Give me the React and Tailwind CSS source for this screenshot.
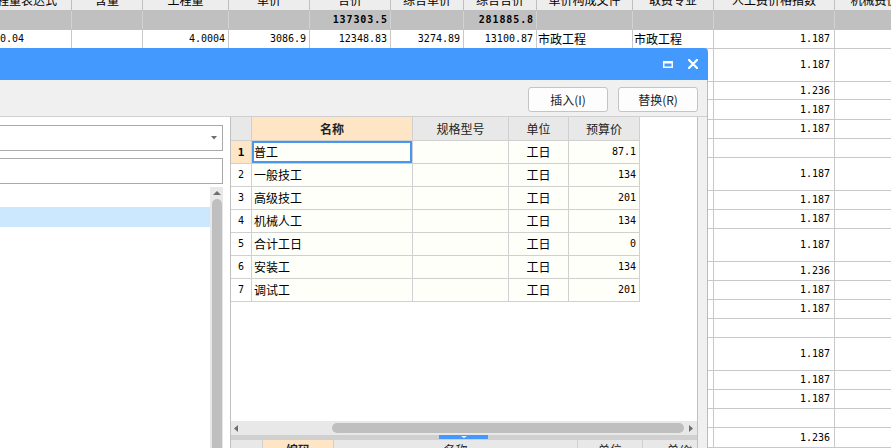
import React from "react";

const NUM = "font-['DejaVu_Sans_Mono',monospace] text-[10px]";

const SHEET_W = [
  "w-[101px]", "w-[71px]", "w-[86px]", "w-[81px]", "w-[81px]", "w-[73px]",
  "w-[73px]", "w-[96px]", "w-[81px]", "w-[121px]", "w-[116px]",
];
const HEAD = [
  "工程量表达式", "含量", "工程量", "单价", "合价", "综合单价",
  "综合合价", "单价构成文件", "取费专业", "人工费价格指数", "机械费价格指数",
];

const ROWS = [
  ["h-[33px]", "1.187"], ["h-[18px]", "1.236"], ["h-[20px]", "1.187"],
  ["h-[19px]", "1.187"], ["h-[19px]", ""], ["h-[33px]", "1.187"],
  ["h-[19px]", "1.187"], ["h-[19px]", "1.187"], ["h-[33px]", "1.187"],
  ["h-[19px]", "1.236"], ["h-[19px]", "1.187"], ["h-[19px]", "1.187"],
  ["h-[19px]", ""], ["h-[33px]", "1.187"], ["h-[19px]", "1.187"],
  ["h-[19px]", "1.187"], ["h-[19px]", ""], ["h-[20px]", "1.236"],
  ["h-[20px]", ""],
];

function Sheet() {
  return (
    <div className="ml-[-29px] w-[960px]">
      <div className="flex h-[21px] mt-[-10px] bg-[#ededed] border-b border-[#c0c0c0]">
        {HEAD.map((h, i) => (
          <div key={i} className={`${SHEET_W[i]} shrink-0 h-full flex items-center justify-center border-r border-[#c0c0c0] whitespace-nowrap overflow-hidden`}>
            {h}
          </div>
        ))}
      </div>
      <div className="flex h-[19px] bg-[#c0c0c0] border-b border-[#c0c0c0]">
        {SHEET_W.map((w, i) => (
          <div key={i} className={`${w} shrink-0 h-full flex items-center justify-end pr-[2px] border-r border-[#d2d2d2] ${NUM} font-bold tracking-[0.9px]`}>
            {i === 4 ? "137303.5" : i === 6 ? "281885.8" : ""}
          </div>
        ))}
      </div>
      <div className="flex h-[19px] border-b border-[#c8c8c8]">
        <div className={`${SHEET_W[0]} shrink-0 h-full flex items-center pl-[29px] border-r border-[#c8c8c8] ${NUM}`}>0.04</div>
        <div className={`${SHEET_W[1]} shrink-0 h-full border-r border-[#c8c8c8]`} />
        <div className={`${SHEET_W[2]} shrink-0 h-full flex items-center justify-end pr-[3px] border-r border-[#c8c8c8] ${NUM}`}>4.0004</div>
        <div className={`${SHEET_W[3]} shrink-0 h-full flex items-center justify-end pr-[3px] border-r border-[#c8c8c8] ${NUM}`}>3086.9</div>
        <div className={`${SHEET_W[4]} shrink-0 h-full flex items-center justify-end pr-[3px] border-r border-[#c8c8c8] ${NUM}`}>12348.83</div>
        <div className={`${SHEET_W[5]} shrink-0 h-full flex items-center justify-end pr-[3px] border-r border-[#c8c8c8] ${NUM}`}>3274.89</div>
        <div className={`${SHEET_W[6]} shrink-0 h-full flex items-center justify-end pr-[3px] border-r border-[#c8c8c8] ${NUM}`}>13100.87</div>
        <div className={`${SHEET_W[7]} shrink-0 h-full flex items-center pl-[1px] border-r border-[#c8c8c8]`}>市政工程</div>
        <div className={`${SHEET_W[8]} shrink-0 h-full flex items-center pl-[1px] border-r border-[#c8c8c8]`}>市政工程</div>
        <div className={`${SHEET_W[9]} shrink-0 h-full flex items-center justify-end pr-[4px] border-r border-[#c8c8c8] ${NUM}`}>1.187</div>
        <div className={`${SHEET_W[10]} shrink-0 h-full border-r border-[#c8c8c8]`} />
      </div>
      {ROWS.map(([h, v], r) => (
        <div key={r} className={`flex ${h} border-b border-[#c8c8c8]`}>
          {SHEET_W.map((w, i) => (
            <div key={i} className={`${w} shrink-0 h-full flex items-center justify-end pr-[4px] border-r border-[#c8c8c8] ${NUM}`}>
              {i === 9 ? v : ""}
            </div>
          ))}
        </div>
      ))}
    </div>
  );
}

const DATA = [
  ["普工", "工日", "87.1"],
  ["一般技工", "工日", "134"],
  ["高级技工", "工日", "201"],
  ["机械人工", "工日", "134"],
  ["合计工日", "工日", "0"],
  ["安装工", "工日", "134"],
  ["调试工", "工日", "201"],
];

function Table() {
  return (
    <div className="flex flex-col">
      <div className="flex h-[24px] text-[#222]">
        <div className="w-[21px] shrink-0 bg-[#e8e8e8] border-r border-b border-[#d0d0d0]" />
        <div className="w-[161px] shrink-0 bg-[#fde5c6] border-r border-b border-[#d0d0d0] flex items-center justify-center font-bold">名称</div>
        <div className="w-[96px] shrink-0 bg-[#e8e8e8] border-r border-b border-[#d0d0d0] flex items-center justify-center">规格型号</div>
        <div className="w-[60px] shrink-0 bg-[#e8e8e8] border-r border-b border-[#d0d0d0] flex items-center justify-center">单位</div>
        <div className="w-[71px] shrink-0 bg-[#e8e8e8] border-r border-b border-[#d0d0d0] flex items-center justify-center">预算价</div>
      </div>
      {DATA.map(([name, unit, price], i) => (
        <div key={i} className="flex h-[23px]">
          <div className={`w-[21px] shrink-0 border-r border-b border-[#d0d0d0] flex items-center justify-center ${NUM} ${i === 0 ? "bg-[#fde5c6] font-bold text-[11px]" : "bg-white"}`}>
            {i + 1}
          </div>
          <div className={`w-[161px] shrink-0 bg-[#fffffa] border-r border-b border-[#d0d0d0] flex items-center pl-[2px] ${i === 0 ? "shadow-[inset_0_0_0_2px_#4a95ee]" : ""}`}>
            {name}
          </div>
          <div className="w-[96px] shrink-0 bg-[#fffffa] border-r border-b border-[#d0d0d0]" />
          <div className="w-[60px] shrink-0 bg-[#fffffa] border-r border-b border-[#d0d0d0] flex items-center justify-center">{unit}</div>
          <div className={`w-[71px] shrink-0 bg-[#fffffa] border-r border-b border-[#d0d0d0] flex items-center justify-end pr-[3px] ${NUM}`}>{price}</div>
        </div>
      ))}
    </div>
  );
}

function Dialog() {
  return (
    <div className="absolute left-[-20px] top-[48px] w-[728px] h-[420px] flex flex-col">
      <div className="h-[32px] shrink-0 bg-[#4499ff] rounded-tr-[4px] flex items-center justify-end pr-[10px] gap-[15px]">
        <svg width="10" height="7" viewBox="0 0 10 7">
          <rect x="0" y="0" width="10" height="7" fill="#fff" />
          <rect x="1.5" y="2.5" width="7" height="3" fill="#4499ff" />
        </svg>
        <svg width="10" height="10" viewBox="0 0 10 10">
          <path d="M1 1 L9 9 M9 1 L1 9" stroke="#fff" strokeWidth="2.2" strokeLinecap="square" />
        </svg>
      </div>
      <div className="flex-1 flex flex-col bg-[#f0f0f0] border-r border-[#bcbcbc]">
        <div className="h-[37px] shrink-0 flex justify-end items-start pt-[7px] pr-[9px] gap-[10px] border-b border-[#d0d0d0]">
          <div className="w-[80px] h-[25px] border border-[#c4c4c4] rounded-[3px] bg-[#fdfdfd] flex items-center justify-center text-[#222]">插入(I)</div>
          <div className="w-[80px] h-[25px] border border-[#c4c4c4] rounded-[3px] bg-[#fdfdfd] flex items-center justify-center text-[#222]">替换(R)</div>
        </div>
        <div className="flex-1 flex">
          <div className="w-[250px] shrink-0 bg-white pt-[8px] pr-[7px] flex flex-col">
            <div className="h-[26px] border border-[#a9a9a9] flex items-center justify-end pr-[5px]">
              <svg width="6" height="4" viewBox="0 0 6 4"><path d="M0 0 L6 0 L3 3.5 Z" fill="#6e6e6e" /></svg>
            </div>
            <div className="h-[26px] mt-[7px] border border-[#a9a9a9]" />
            <div className="flex-1 flex mt-[3px]">
              <div className="flex-1 flex flex-col">
                <div className="h-[20px]" />
                <div className="h-[20px] bg-[#cce8ff]" />
              </div>
              <div className="w-[13px] shrink-0 bg-[#e8e8e8] flex flex-col items-center">
                <div className="h-[12px] flex items-center justify-center">
                  <svg width="8" height="4" viewBox="0 0 8 4"><path d="M0 4 L8 4 L4 0 Z" fill="#6e6e6e" /></svg>
                </div>
                <div className="flex-1 w-[10px] bg-[#bfbfbf] rounded-t-[5px]" />
              </div>
            </div>
          </div>
          <div className="w-[468px] shrink-0 bg-white border-l border-r border-[#c0c0c0] flex flex-col">
            <div className="h-[304px] shrink-0">
              <Table />
            </div>
            <div className="h-[14px] shrink-0 bg-[#e8e8e8] flex items-center pl-[3px]">
              <svg width="4" height="7" viewBox="0 0 4 7"><path d="M4 0 L4 7 L0 3.5 Z" fill="#6e6e6e" /></svg>
              <div className="ml-[94px] w-[352px] h-[10px] rounded-full bg-[#bfbfbf]" />
              <svg className="ml-[5px]" width="4" height="7" viewBox="0 0 4 7"><path d="M0 0 L0 7 L4 3.5 Z" fill="#6e6e6e" /></svg>
            </div>
            <div className="h-[5px] shrink-0 bg-[#d0d0d0]">
              <div className="ml-[208px] w-[49px] h-[4px] bg-[#4499ff] flex justify-center pt-[1px]">
                <svg width="6" height="2" viewBox="0 0 6 2"><path d="M0 0 L6 0 L3 2 Z" fill="#fff" /></svg>
              </div>
            </div>
            <div className="h-[20px] shrink-0 bg-[#e8e8e8] flex text-[#222]">
              <div className="w-[32px] shrink-0 border-r border-[#d0d0d0]" />
              <div className="w-[71px] shrink-0 bg-[#fde5c6] border-r border-[#d0d0d0] flex items-center justify-center font-bold">编码</div>
              <div className="w-[244px] shrink-0 border-r border-[#d0d0d0] flex items-center justify-center">名称</div>
              <div className="w-[65px] shrink-0 border-r border-[#d0d0d0] flex items-center justify-center">单位</div>
              <div className="flex-1 flex items-start justify-end pr-[3px] pt-[6px] relative">
                <span className="absolute left-[24px] top-0 h-full flex items-center">单价</span>
                <svg width="7" height="4" viewBox="0 0 7 4"><path d="M0 4 L7 4 L3.5 0 Z" fill="#6e6e6e" /></svg>
              </div>
            </div>
          </div>
        </div>
      </div>
    </div>
  );
}

export default function App() {
  return (
    <div className="relative w-[891px] h-[448px] overflow-hidden bg-white text-black font-['Noto_Sans_CJK_SC',sans-serif] text-[12px] leading-none">
      <Sheet />
      <Dialog />
    </div>
  );
}
